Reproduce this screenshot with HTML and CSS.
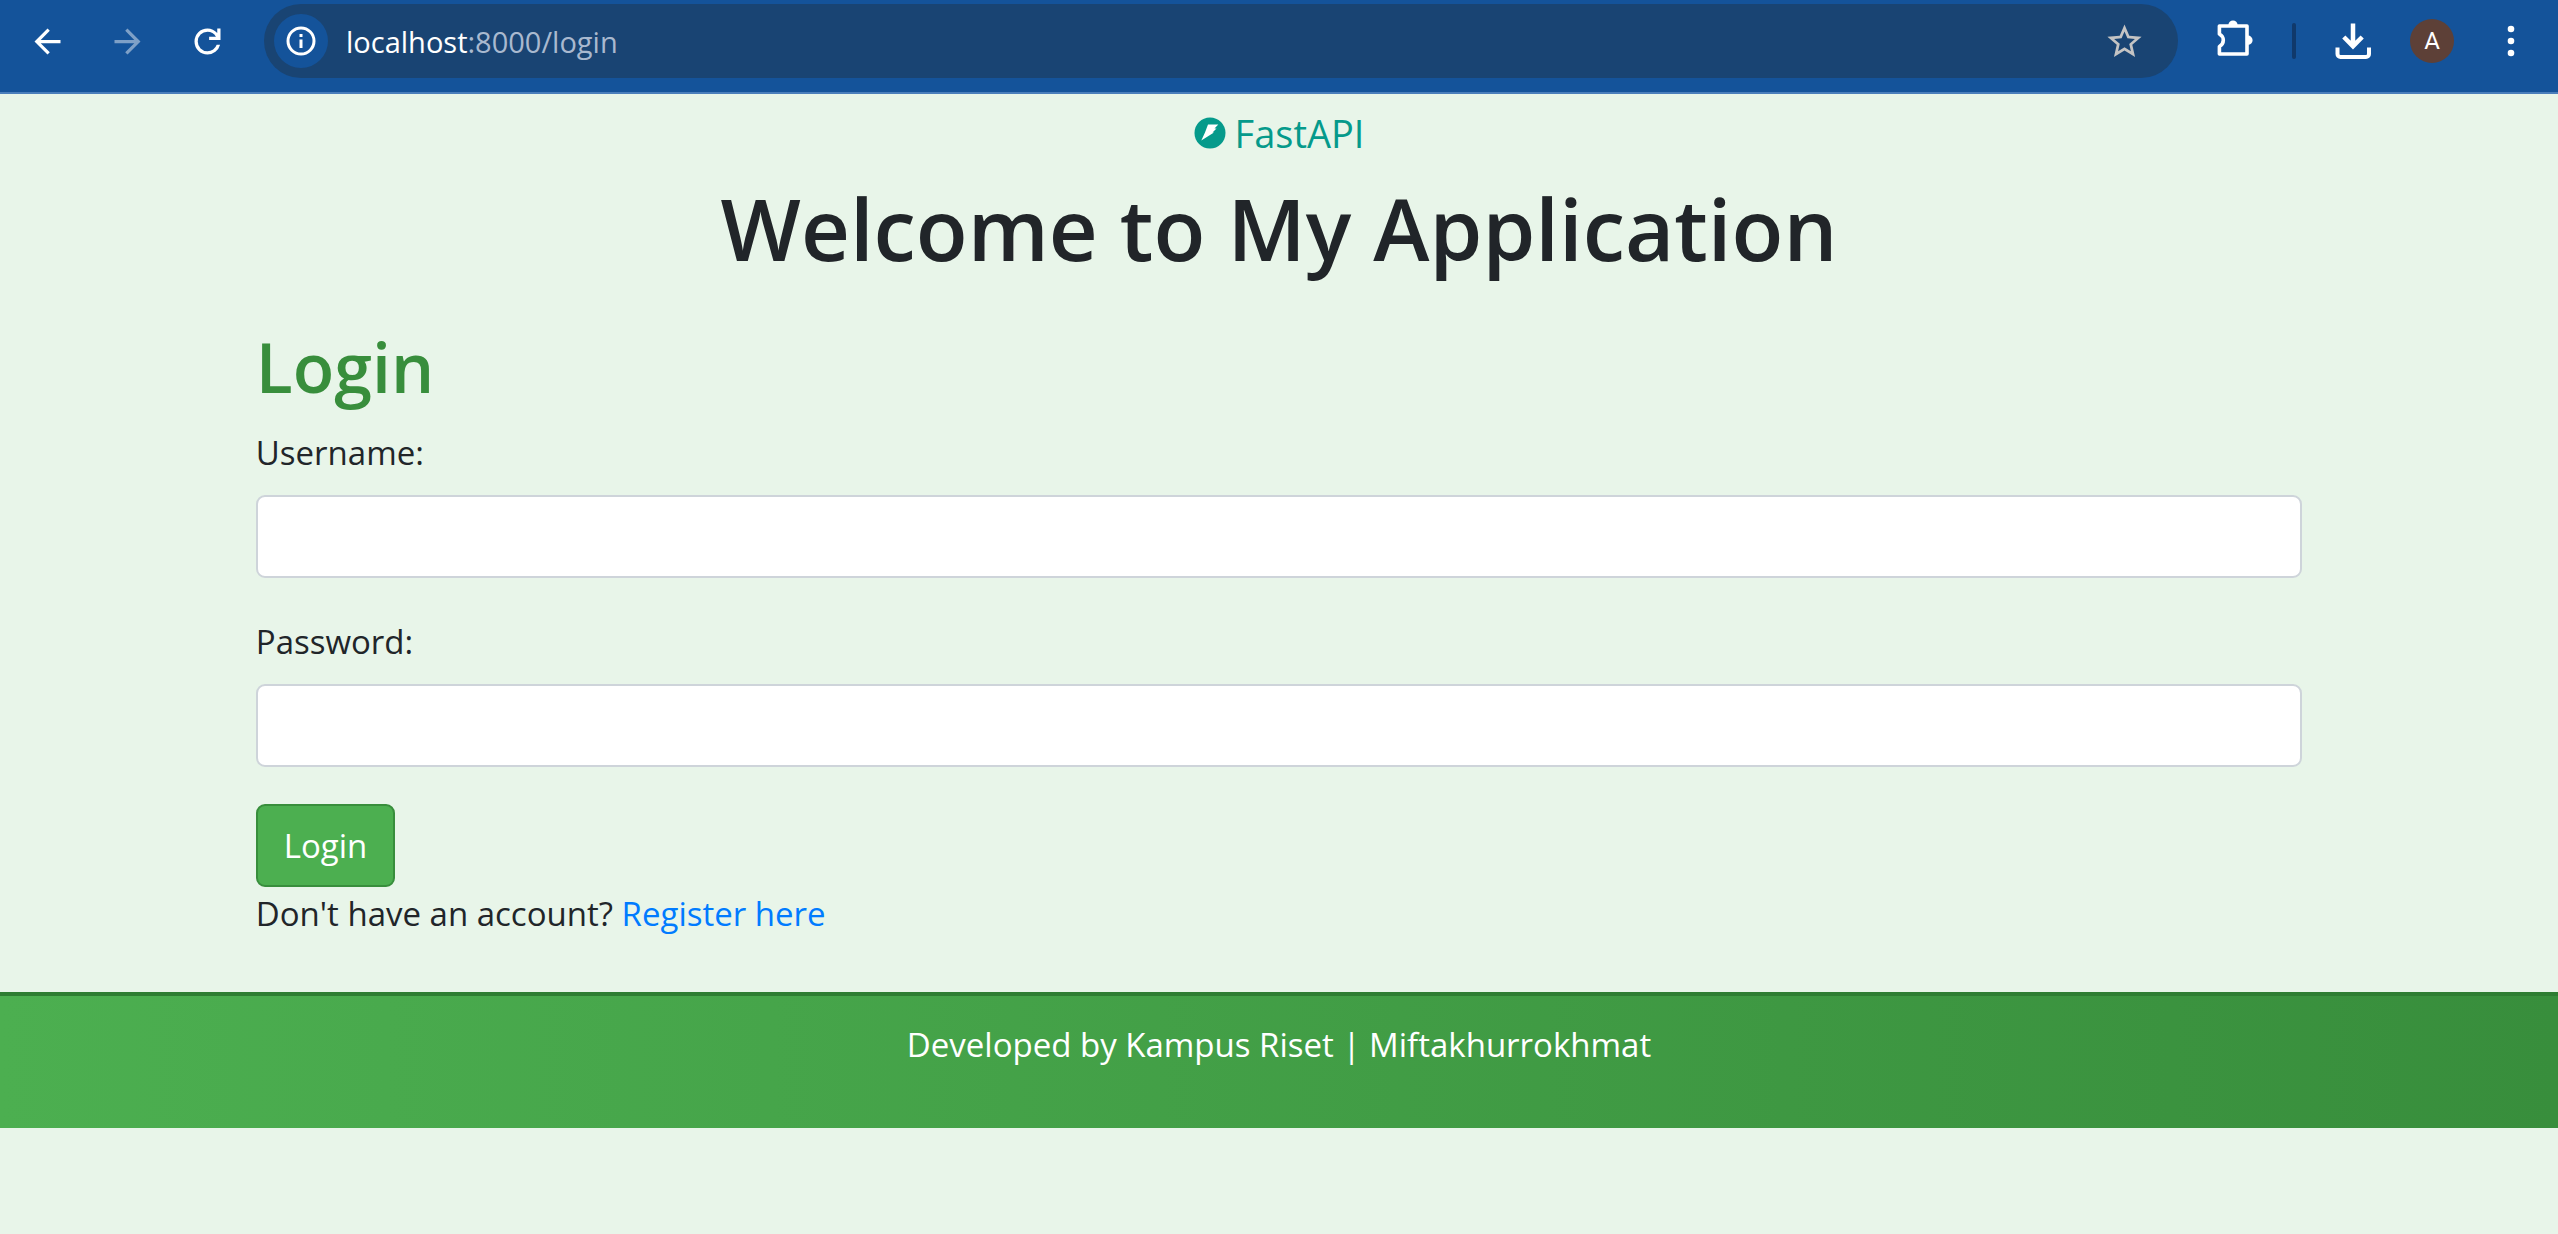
FILE: index.html
```html
<!DOCTYPE html>
<html lang="en">
<head>
<meta charset="utf-8">
<title>Login</title>
<link rel="stylesheet" href="styles.css">
</head>
<body>
<div class="toolbar">
  <div class="nav-buttons">
    <button class="tool" type="button" aria-label="Back"><svg width="39" height="39" viewBox="0 0 24 24"><path d="M20 11H7.83l5.59-5.59L12 4l-8 8 8 8 1.41-1.41L7.83 13H20z"/></svg></button>
    <button class="tool tool-disabled" type="button" aria-label="Forward"><svg width="39" height="39" viewBox="0 0 24 24"><path d="M12 4l-1.41 1.41L16.17 11H4v2h12.17l-5.58 5.59L12 20l8-8z"/></svg></button>
    <button class="tool" type="button" aria-label="Reload"><svg width="39" height="39" viewBox="0 0 24 24"><path d="M12 20q-3.35 0-5.675-2.325Q4 15.35 4 12q0-3.35 2.325-5.675Q8.65 4 12 4q1.725 0 3.3.713 1.575.712 2.7 2.037V4h2v7h-7V9h4.2q-.8-1.4-2.188-2.2Q13.625 6 12 6 9.5 6 7.75 7.75T6 12q0 2.5 1.75 4.25T12 18q1.925 0 3.475-1.1T17.65 14h2.1q-.7 2.65-2.85 4.325Q14.75 20 12 20Z"/></svg></button>
  </div>
  <div class="address">
    <button class="site-info" type="button" aria-label="Site information"><svg width="30" height="30" viewBox="0 0 30 30"><circle cx="15" cy="15" r="13" fill="none" stroke="#fff" stroke-width="3"/><path d="M13.500 13.500h3v8.500h-3zM13.500 8h3v3h-3z"/></svg></button>
    <span class="url"><span class="host">localhost</span>:8000/login</span>
    <button class="star" type="button" aria-label="Bookmark"><svg width="41" height="41" viewBox="0 0 24 24"><path d="M22 9.240l-7.190-.62L12 2 9.190 8.630 2 9.240l5.460 4.730L5.820 21 12 17.270 18.180 21l-1.630-7.030L22 9.240zM12 15.400l-3.760 2.270 1-4.280-3.320-2.880 4.380-.38L12 6.100l1.710 4.040 4.380.38-3.320 2.880 1 4.280L12 15.400z"/></svg></button>
  </div>
  <button class="tool" type="button" aria-label="Extensions"><svg width="44" height="44" viewBox="0 0 44 44"><path d="M6.400 7H34V35H6.400V27.500C9 26 10.300 24 10.300 21.300S9 16.500 6.400 15Z" fill="none" stroke="#fff" stroke-width="3.600" stroke-linejoin="round"/><path d="M15.400 6a4.600 4.600 0 0 1 9.200 0zM35 16.600a4.600 4.600 0 0 1 0 9.200z"/></svg></button>
  <span class="divider"></span>
  <button class="tool" type="button" aria-label="Downloads"><svg width="44" height="44" viewBox="0 0 44 44"><path d="M22 4.500V26M12.800 18l9.200 9.200 9.200-9.200" fill="none" stroke="#fff" stroke-width="4.500"/><path d="M6.500 28.500V35a3 3 0 0 0 3 3h25.500a3 3 0 0 0 3-3v-6.500" fill="none" stroke="#fff" stroke-width="4"/></svg></button>
  <button class="avatar" type="button">A</button>
  <button class="tool" type="button" aria-label="Menu"><svg width="44" height="44" viewBox="0 0 44 44"><circle cx="22" cy="10" r="3.300"/><circle cx="22" cy="22" r="3.300"/><circle cx="22" cy="34" r="3.300"/></svg></button>
</div>
<header class="header">
  <div class="logo">
    <svg width="32" height="32" viewBox="0 0 32 32"><circle cx="16" cy="16" r="15.500" fill="#059a8b"/><path d="M14 7.500H24.300L20.500 11.500H22.500L18.500 15.500H20L7.300 23.500 11 15.500z" fill="#fff"/></svg>
    <span>FastAPI</span>
  </div>
  <h1>Welcome to My Application</h1>
</header>
<main class="container">
  <h2>Login</h2>
  <form>
    <div class="field">
      <label for="username">Username:</label>
      <input id="username" name="username" type="text">
    </div>
    <div class="field">
      <label for="password">Password:</label>
      <input id="password" name="password" type="password">
    </div>
    <button class="submit" type="submit">Login</button>
  </form>
  <p>Don't have an account? <a href="/register">Register here</a></p>
</main>
<footer class="footer">
  <p>Developed by Kampus Riset | Miftakhurrokhmat</p>
</footer>
</body>
</html>
```
FILE: styles.css
```css
* { box-sizing: border-box; }

body {
  margin: 0;
  background: #e8f5e9;
  color: #212529;
  font-family: "Open Sans", "Noto Sans", sans-serif;
  font-size: 33px;
  line-height: 53px;
}

h1, h2, p { margin: 0; }

button {
  padding: 0;
  border: 0;
  background: none;
  color: #fff;
  font: inherit;
}

svg { display: block; fill: #fff; }

.toolbar {
  display: flex;
  align-items: center;
  gap: 25px;
  padding: 4px 15px 14px;
  background: #14539a;
  border-bottom: 2px solid #4a7ebb;
}

.nav-buttons { display: flex; gap: 16px; }

.tool {
  display: grid;
  place-items: center;
  width: 64px;
  height: 64px;
}

.tool-disabled { opacity: 0.45; }

.address {
  flex: 1;
  display: flex;
  align-items: center;
  height: 74px;
  padding: 0 33px 0 10px;
  border-radius: 37px;
  background: #194473;
}

.site-info {
  display: grid;
  place-items: center;
  width: 54px;
  height: 54px;
  border-radius: 50%;
  background: #14539a;
}

.url {
  flex: 1;
  margin-left: 18px;
  color: #a9b9cf;
  font-size: 29px;
}

.host { color: #fff; }

.star svg { fill: #c4c4c4; }

.divider {
  width: 4px;
  height: 36px;
  border-radius: 2px;
  background: #10396b;
}

.avatar {
  width: 44px;
  height: 44px;
  border-radius: 50%;
  background: #5d4037;
  font-family: Roboto, sans-serif;
  font-size: 24px;
  line-height: 44px;
}

.header { text-align: center; }

.logo {
  display: flex;
  align-items: center;
  justify-content: center;
  gap: 9px;
  height: 78px;
  margin-bottom: 3px;
  color: #059a8b;
  font-size: 38px;
}

h1 {
  font-size: 85px;
  font-weight: 600;
  line-height: 106px;
}

.container {
  width: 80%;
  margin: 0 auto;
  padding: 44px 0 52px;
}

h2 {
  margin-bottom: 17px;
  color: #388e3c;
  font-size: 68px;
  font-weight: 600;
  line-height: 84px;
}

.field { margin-bottom: 37px; }

.field label {
  display: block;
  margin-bottom: 16px;
}

.field input {
  display: block;
  width: 100%;
  height: 83px;
  padding: 0 26px;
  border: 2px solid #ced4da;
  border-radius: 9px;
  background: #fff;
  font: inherit;
}

.submit {
  display: block;
  height: 83px;
  padding: 0 26px;
  border: 2px solid #388e3c;
  border-radius: 9px;
  background: #4caf50;
}

a { color: #007bff; text-decoration: none; }

.footer {
  padding: 22px 22px 57px;
  border-top: 4px solid #2e7d32;
  background: linear-gradient(90deg, #4caf50, #388e3c);
  color: #fff;
  text-align: center;
}
```
